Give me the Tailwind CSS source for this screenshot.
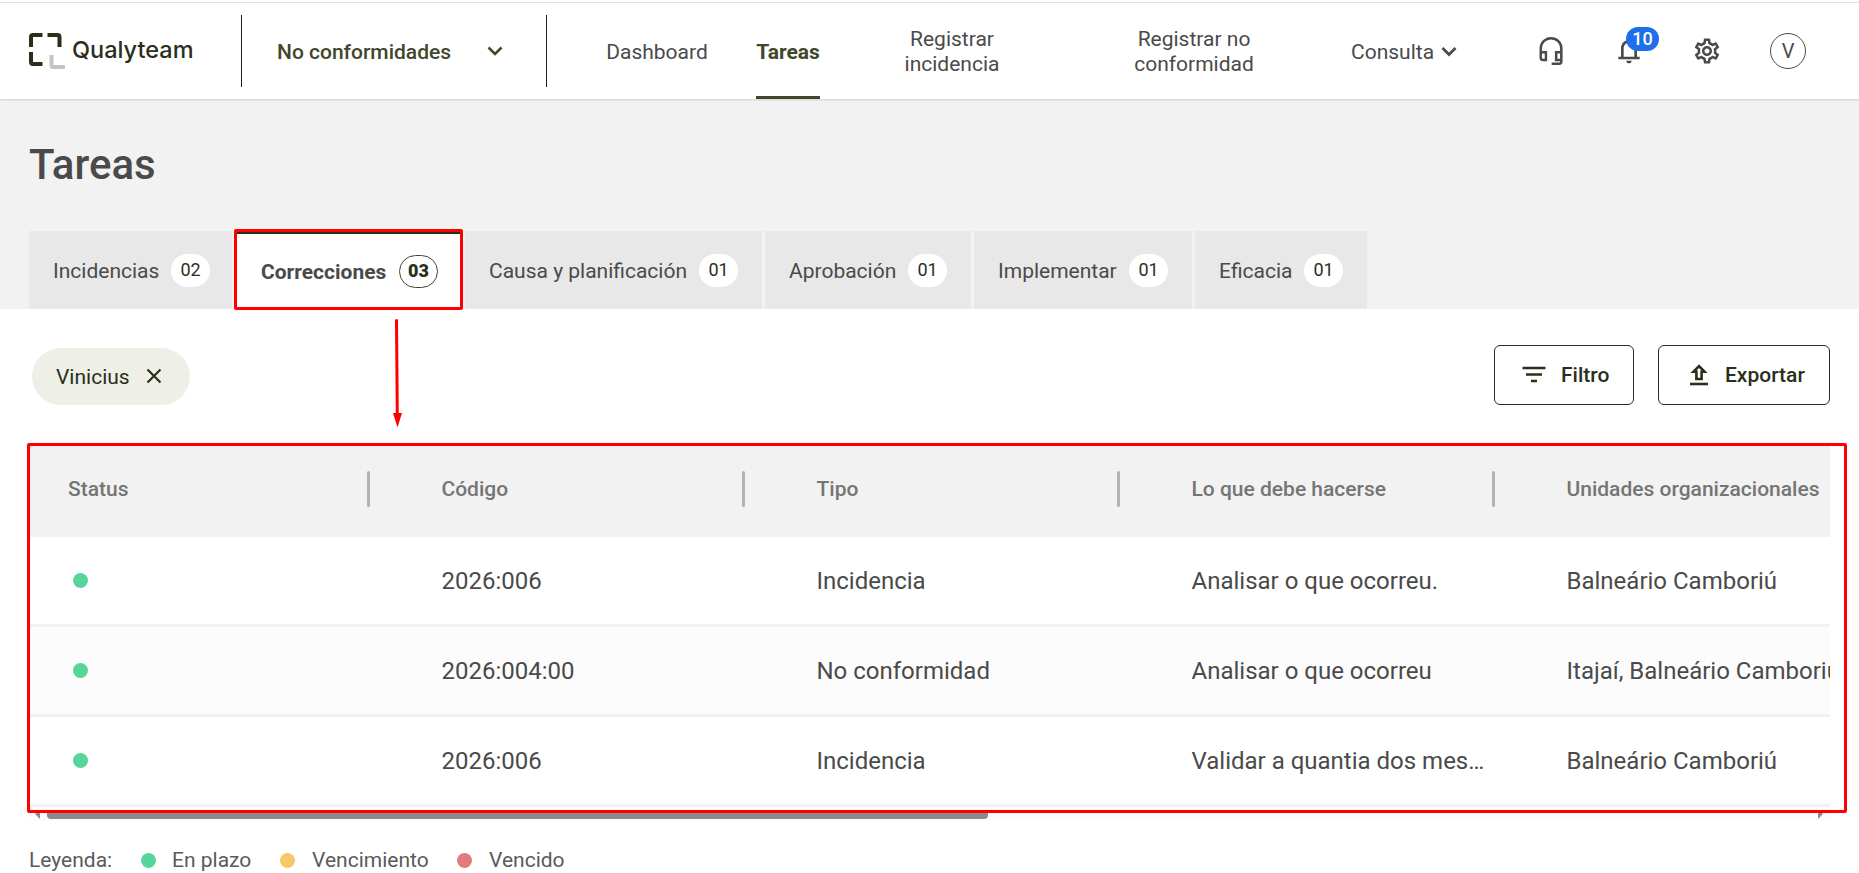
<!DOCTYPE html>
<html lang="es">
<head>
<meta charset="utf-8">
<title>Tareas</title>
<script src="https://cdn.jsdelivr.net/npm/@tailwindcss/browser@4"></script>
</head>
<body class="relative w-[1859px] h-[873px] pt-0.5 overflow-hidden bg-white font-['Roboto',sans-serif] text-[21px] leading-[28px] text-[#4a4a4a]">
<header class="flex h-[97px] border-t border-[#e0e0e0] relative shadow-[0_1px_2px_rgba(0,0,0,0.14)] bg-white">
  <div class="w-[241px] pl-[29px] pt-[30px] flex">
    <svg class="w-9 h-9 shrink-0" viewBox="0 0 36 36" fill="none" stroke-width="4"><path d="M2 14V4q0-2 2-2h9.500M18.500 2h10q2 0 2 2v10M2 19v10q0 2 2 2h9.500" stroke="#2a2f1b"/><path d="M22.500 22v10q0 2 2 2H36" stroke="#c4c4c6"/></svg>
    <span class="ml-[7px] mt-[2px] font-['Inter',sans-serif] font-medium text-[23.5px] leading-[30px] text-[#2a2f1b] whitespace-nowrap">Qualyteam</span>
  </div>
  <div class="mt-3 w-[306px] h-[72px] border-x border-[#1d1d1d] flex items-center text-[#40472a] font-medium">
    <span class="w-[211px] pl-[35px] pt-px whitespace-nowrap">No conformidades</span>
    <svg class="ml-[34px] w-4 h-4" viewBox="0 0 16 16" fill="none" stroke="currentColor" stroke-width="2.500"><path d="M1.500 4.500L8 11l6.500-6.500"/></svg>
  </div>
  <nav class="flex h-[96px] text-center leading-[25px]">
    <a class="ml-[59px] w-[102px] flex items-center justify-center pt-0.5">Dashboard</a>
    <a class="ml-[48px] w-[64px] flex items-center justify-center font-bold text-[#40472a] border-b-[3px] pt-[5px] border-[#40472a]">Tareas</a>
    <a class="ml-[72px] w-[120px] flex items-center justify-center pt-px">Registrar incidencia</a>
    <a class="ml-[112px] w-[140px] flex items-center justify-center pt-px">Registrar no conformidad</a>
    <a class="ml-[87px] w-[106px] flex items-center justify-between pt-0.5 whitespace-nowrap">Consulta
      <svg class="w-4 h-4 -mt-px" viewBox="0 0 16 16" fill="none" stroke="currentColor" stroke-width="2.700"><path d="M1.500 4L8 10.500 14.500 4"/></svg></a>
  </nav>
  <div class="flex items-center h-[96px] ml-[78px]">
    <svg class="w-8 h-8" viewBox="0 0 24 24" fill="currentColor"><path d="M12 1.500a8.600 8.600 0 0 0-8.600 8.600V17a2.600 2.600 0 0 0 2.600 2.600h3.100V12H5.200v-1.900a6.800 6.800 0 0 1 13.600 0V12h-3.900v7.600h3.900v1H12.500v1.900h5.600a2.600 2.600 0 0 0 2.600-2.600v-9.800A8.600 8.600 0 0 0 12 1.500zM7.300 13.800v4H6a.8.8 0 0 1-.8-.8v-3.200zm11.500 4h-2v-4h2z"/></svg>
    <div class="relative ml-[46px] w-8 h-8">
      <svg class="w-8 h-8 -mt-px" viewBox="0 0 24 24" fill="currentColor"><path d="M12 22c1.100 0 2-.9 2-2h-4c0 1.100.9 2 2 2zm6-5v-6c0-3.070-1.630-5.640-4.500-6.320V4c0-.83-.67-1.500-1.500-1.500s-1.500.67-1.500 1.500v.68C7.640 5.360 6 7.920 6 11v6H4v2h16v-2zm-2 0H8v-6c0-2.480 1.510-4.500 4-4.500s4 2.020 4 4.500z"/></svg>
      <span class="absolute left-[13px] -top-2 w-[33px] h-6 rounded-full bg-[#1f6feb] text-white text-lg leading-6 font-medium text-center">10</span>
    </div>
    <svg class="ml-[47px] w-[30px] h-[30px]" viewBox="0 0 24 24" fill="currentColor"><path d="M19.430 12.980c.04-.32.07-.64.07-.98 0-.34-.03-.66-.07-.98l2.110-1.650c.19-.15.240-.42.12-.64l-2-3.460c-.09-.16-.26-.25-.44-.25-.06 0-.12.01-.17.03l-2.490 1c-.52-.4-1.080-.73-1.690-.98l-.38-2.650C14.460 2.180 14.250 2 14 2h-4c-.25 0-.46.18-.49.42l-.38 2.650c-.61.25-1.170.59-1.690.98l-2.490-1c-.06-.02-.12-.03-.18-.03-.17 0-.34.09-.43.25l-2 3.460c-.13.22-.07.49.12.64l2.110 1.650c-.04.32-.07.65-.07.98 0 .33.03.66.070.98l-2.110 1.650c-.19.15-.24.42-.12.64l2 3.460c.09.16.26.25.440.25.06 0 .12-.01.17-.03l2.490-1c.52.4 1.080.73 1.690.98l.38 2.650c.03.24.24.42.490.42h4c.25 0 .46-.18.49-.42l.38-2.650c.61-.25 1.170-.59 1.690-.98l2.490 1c.06.02.12.03.18.03.17 0 .34-.09.430-.25l2-3.460c.12-.22.07-.49-.12-.64l-2.110-1.650zm-1.980-1.710c.04.31.05.52.050.73 0 .21-.02.43-.05.73l-.14 1.130.89.7 1.080.84-.7 1.210-1.270-.51-1.040-.42-.9.68c-.43.32-.84.56-1.250.73l-1.060.43-.16 1.130-.2 1.350h-1.400l-.19-1.350-.16-1.130-1.060-.43c-.43-.18-.83-.41-1.230-.71l-.91-.7-1.060.43-1.270.51-.7-1.210 1.080-.84.89-.7-.14-1.130c-.03-.31-.05-.54-.05-.74s.02-.43.050-.73l.14-1.130-.89-.7-1.080-.84.7-1.210 1.270.51 1.040.42.9-.68c.43-.32.84-.56 1.250-.73l1.060-.43.16-1.130.2-1.350h1.390l.19 1.350.16 1.130 1.060.43c.43.18.83.41 1.230.71l.91.7 1.060-.43 1.270-.51.7 1.210-1.070.85-.89.7.14 1.130zM12 8c-2.210 0-4 1.790-4 4s1.790 4 4 4 4-1.790 4-4-1.790-4-4-4zm0 6c-1.100 0-2-.9-2-2s.9-2 2-2 2 .9 2 2-.9 2-2 2z"/></svg>
    <span class="ml-[48px] w-9 h-9 rounded-full border border-[#4a4a4a] flex items-center justify-center text-xl">V</span>
  </div>
</header>

<section class="h-[210px] bg-[#f2f2f2] pl-[29px] pt-[34px]">
  <h1 class="h-[98px] text-[42px] leading-[64px] font-medium">Tareas</h1>
  <div class="flex gap-[3px] h-[78px] whitespace-nowrap">
    <div class="w-[203px] bg-[#e8e8e8] flex items-center justify-between pl-[24px] pr-[22px]"><span class="pt-0.5">Incidencias</span><b class="font-normal text-lg bg-white rounded-full w-[39px] h-[33px] leading-[31px] text-center text-[#2a2f1b]">02</b></div>
    <div class="w-[227px] bg-white border-t-[3px] border-[#2a2f1b] flex items-center justify-between pl-[26px] pr-[24px] font-bold"><span>Correcciones</span><b class="text-lg border border-[#40472a] rounded-full w-[39px] h-[33px] leading-[29px] text-center text-[#2a2f1b]">03</b></div>
    <div class="w-[297px] bg-[#e8e8e8] flex items-center justify-between px-[24px]"><span class="pt-0.5">Causa y planificación</span><b class="font-normal text-lg bg-white rounded-full w-[39px] h-[33px] leading-[31px] text-center text-[#2a2f1b]">01</b></div>
    <div class="w-[206px] bg-[#e8e8e8] flex items-center justify-between px-[24px]"><span class="pt-0.5">Aprobación</span><b class="font-normal text-lg bg-white rounded-full w-[39px] h-[33px] leading-[31px] text-center text-[#2a2f1b]">01</b></div>
    <div class="w-[218px] bg-[#e8e8e8] flex items-center justify-between px-[24px]"><span class="pt-0.5">Implementar</span><b class="font-normal text-lg bg-white rounded-full w-[39px] h-[33px] leading-[31px] text-center text-[#2a2f1b]">01</b></div>
    <div class="w-[172px] bg-[#e8e8e8] flex items-center justify-between px-[24px]"><span class="pt-0.5">Eficacia</span><b class="font-normal text-lg bg-white rounded-full w-[39px] h-[33px] leading-[31px] text-center text-[#2a2f1b]">01</b></div>
  </div>
</section>

<section class="flex h-[136px] pt-9 pl-8 pr-[29px] text-[#2a2f1b]">
  <div class="mt-[3px] w-[158px] h-[57px] rounded-full bg-[#eeefe7] flex items-center justify-between pl-[24px] pr-[28px]">Vinicius
    <svg class="w-4 h-4 -mt-0.5" viewBox="0 0 16 16" stroke="currentColor" stroke-width="2.200"><path d="M1.500 1.500l13 13M14.500 1.500l-13 13"/></svg></div>
  <button class="ml-auto w-[140px] h-[60px] rounded-md border border-[#2a2f1b] font-medium flex items-center pl-[27px]">
    <svg class="w-6 h-6 mr-[15px]" viewBox="0 0 24 24" stroke="currentColor" stroke-width="2.600"><path d="M0.500 5h23M4 11.500h16M9 18h6"/></svg>Filtro</button>
  <button class="ml-6 w-[172px] h-[60px] rounded-md border border-[#2a2f1b] font-medium flex items-center pl-[30px]">
    <svg class="w-5 h-6 mr-[16px]" viewBox="0 0 20 24" fill="none" stroke="currentColor" stroke-width="2.600"><path d="M1 21h18"/><path d="M10 3.200L4.500 8.800h2.900v7.200h5.200V8.800h2.900z"/></svg>Exportar</button>
</section>

<section class="ml-[30px] w-[1800px] h-[376px] overflow-hidden whitespace-nowrap">
  <div class="h-[92px] pb-1 w-[1875px] flex items-center bg-[#f2f2f2] font-medium text-[#757575]">
    <span class="w-[337px] pl-[38px]">Status</span><i class="w-[3px] h-9 rounded-sm bg-[#b3b3b3] mr-[71.500px]"></i>
    <span class="w-[300.500px]">Código</span><i class="w-[3px] h-9 rounded-sm bg-[#b3b3b3] mr-[71.500px]"></i>
    <span class="w-[300.500px]">Tipo</span><i class="w-[3px] h-9 rounded-sm bg-[#b3b3b3] mr-[71.500px]"></i>
    <span class="w-[300.500px]">Lo que debe hacerse</span><i class="w-[3px] h-9 rounded-sm bg-[#b3b3b3] mr-[71.500px]"></i>
    <span>Unidades organizacionales</span>
  </div>
  <div class="h-[90px] w-[1875px] flex items-center border-b-[3px] border-[#f2f2f2] text-2xl"><span class="w-[411.500px] pl-[43px]"><i class="block size-[15px] rounded-full bg-[#57d59a]"></i></span><span class="w-[375px]">2026:006</span><span class="w-[375px]">Incidencia</span><span class="w-[375px]">Analisar o que ocorreu.</span><span>Balneário Camboriú</span></div>
  <div class="h-[90px] w-[1875px] flex items-center border-b-[3px] border-[#f2f2f2] text-2xl bg-[#fcfcfc]"><span class="w-[411.500px] pl-[43px]"><i class="block size-[15px] rounded-full bg-[#57d59a]"></i></span><span class="w-[375px]">2026:004:00</span><span class="w-[375px]">No conformidad</span><span class="w-[375px]">Analisar o que ocorreu</span><span>Itajaí, Balneário Camboriú</span></div>
  <div class="h-[90px] w-[1875px] flex items-center border-b-[3px] border-[#f2f2f2] text-2xl"><span class="w-[411.500px] pl-[43px]"><i class="block size-[15px] rounded-full bg-[#57d59a]"></i></span><span class="w-[375px]">2026:006</span><span class="w-[375px]">Incidencia</span><span class="w-[375px]">Validar a quantia dos mes…</span><span>Balneário Camboriú</span></div>
  <div class="h-[14px] bg-[#fcfcfc] flex items-start w-[1800px] pt-[3px] pl-[5px] pr-[7px]">
    <svg class="w-[5px] h-[9px] mr-[7px]" viewBox="0 0 5 9"><path d="M5 0v9L0 4z" fill="#8b8b8b"/></svg>
    <div class="w-[941px] h-[9px] rounded bg-[#8b8b8b]"></div>
    <svg class="w-[5px] h-[9px] ml-auto" viewBox="0 0 5 9"><path d="M0 0v9L5 4z" fill="#8b8b8b"/></svg>
  </div>
</section>

<footer class="flex items-center h-[30px] mt-[24px] pl-[29px] whitespace-nowrap text-[#5a5a5a]">
  <span class="w-[112px]">Leyenda:</span>
  <i class="size-[15px] rounded-full bg-[#57d59a] mr-[16px]"></i><span class="w-[108px]">En plazo</span>
  <i class="size-[15px] rounded-full bg-[#f7c867] mr-[17px]"></i><span class="w-[145px]">Vencimiento</span>
  <i class="size-[15px] rounded-full bg-[#e37a7c] mr-[17px]"></i><span>Vencido</span>
</footer>

<!-- Annotations over the page -->
<div class="absolute left-[234px] top-[229px] w-[229px] h-[81px] border-[3px] border-[#ff0000] rounded-xs"></div>
<div class="absolute left-[27px] top-[443px] w-[1820px] h-[370px] border-[3px] border-[#ff0000] rounded-xs"></div>
<svg class="absolute left-[390px] top-[318px] w-[16px] h-[110px]" viewBox="0 0 16 110"><path d="M6.500 2.500L7.300 98" stroke="#f00" stroke-width="3" stroke-linecap="round"/><path d="M3 95h9L7.500 109.500z" fill="#f00"/></svg>
</body>
</html>
